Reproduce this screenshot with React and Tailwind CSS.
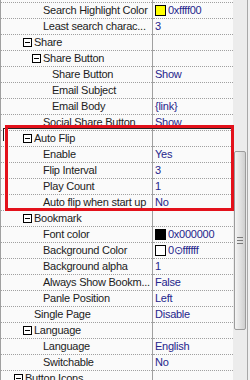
import React from 'react';

const rows = [
  { level: 2, name: '' },
  { level: 2, name: 'Search Highlight Color', value: '0xffff00', swatch: 'bg-[#ffff00]' },
  { level: 2, name: 'Least search charac...', value: '3' },
  { level: 1, name: 'Share', group: true },
  { level: 2, name: 'Share Button', group: true },
  { level: 3, name: 'Share Button', value: 'Show' },
  { level: 3, name: 'Email Subject' },
  { level: 3, name: 'Email Body', value: '{link}' },
  { level: 2, name: 'Social Share Button', value: 'Show' },
  { level: 1, name: 'Auto Flip', group: true },
  { level: 2, name: 'Enable', value: 'Yes' },
  { level: 2, name: 'Flip Interval', value: '3' },
  { level: 2, name: 'Play Count', value: '1' },
  { level: 2, name: 'Auto flip when start up', value: 'No' },
  { level: 1, name: 'Bookmark', group: true },
  { level: 2, name: 'Font color', value: '0x000000', swatch: 'bg-black' },
  { level: 2, name: 'Background Color', value: '0\u2299ffffff', swatch: 'bg-white' },
  { level: 2, name: 'Background alpha', value: '1' },
  { level: 2, name: 'Always Show Bookm...', value: 'False' },
  { level: 2, name: 'Panle Position', value: 'Left' },
  { level: 1, name: 'Single Page', value: 'Disable' },
  { level: 1, name: 'Language', group: true },
  { level: 2, name: 'Language', value: 'English' },
  { level: 2, name: 'Switchable', value: 'No' },
  { level: 0, name: 'Button Icons', group: true },
];

const indent = ['pl-[24px]', 'pl-[33px]', 'pl-[42px]', 'pl-[51px]'];
const boxIndent = ['pl-[13px]', 'pl-[22px]', 'pl-[31px]', 'pl-[40px]'];

function MinusBox() {
  return (
    <span className="w-[9px] h-[9px] border border-black bg-white flex items-center justify-center shrink-0 mr-[2px]">
      <span className="w-[5px] h-px bg-black"></span>
    </span>
  );
}

function Row({ row }) {
  return (
    <div className="flex h-[16px] shrink-0">
      <div
        className={`w-[151px] flex items-center overflow-hidden whitespace-nowrap border-b border-dotted border-[#a0a0a0] text-[#1c1c1c] ${
          row.group ? boxIndent[row.level] : indent[row.level]
        }`}
      >
        {row.group && <MinusBox />}
        <span>{row.name}</span>
      </div>
      <div className="w-px bg-[#a0a0a0]"></div>
      <div className="flex-1 flex items-center pl-[2px] overflow-hidden whitespace-nowrap border-b border-dotted border-[#a0a0a0] text-[#25258c]">
        {row.swatch && <span className={`w-[11px] h-[11px] border border-black mr-[2px] shrink-0 ${row.swatch}`}></span>}
        <span>{row.value}</span>
      </div>
    </div>
  );
}

export default function App() {
  return (
    <div
      className="relative w-[250px] h-[380px] overflow-hidden flex bg-[#f0f0f0] text-[11px] leading-none tracking-[-0.25px]"
      style={{ fontFamily: '"Liberation Sans", Arial, sans-serif' }}
    >
      <div className="w-px bg-[#a0a0a0]"></div>
      <div className="w-[232px] bg-[#fafafa] flex flex-col -mt-[14px] pt-px">
        {rows.map((r, i) => (
          <Row key={i} row={r} />
        ))}
      </div>
      {/* scrollbar */}
      <div className="w-[14px] bg-[#ececec] flex flex-col pt-[151px] pl-[1px]">
        <div className="w-[12px] h-[179px] rounded-[2px] border border-[#9c9c9c] bg-gradient-to-r from-[#f4f4f4] via-[#e2e2e2] to-[#cfcfcf] flex flex-col items-center justify-center gap-[2px]">
          <span className="w-[6px] h-px bg-[#7a7a7a]"></span>
          <span className="w-[6px] h-px bg-[#7a7a7a]"></span>
          <span className="w-[6px] h-px bg-[#7a7a7a]"></span>
        </div>
      </div>
      <div className="w-px bg-[#a8a8a8]"></div>
      <div className="flex-1 bg-[#f0f0f0]"></div>

      {/* focus rect on Auto Flip */}
      <div className="absolute left-[3px] top-[128px] w-[230px] h-px bg-[#222]"></div>
      <div className="absolute left-[3px] top-[128px] w-px h-[13px] bg-[#222]"></div>
      {/* red highlight */}
      <div className="absolute left-[5px] top-[125px] w-[229px] h-[86px] border-[3px] border-[#e3111b]"></div>
    </div>
  );
}
